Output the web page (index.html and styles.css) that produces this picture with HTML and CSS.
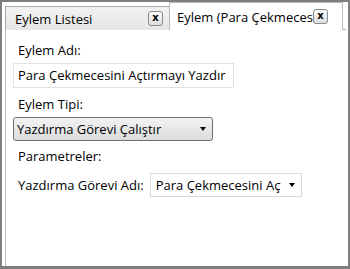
FILE: index.html
```html
<!DOCTYPE html>
<html>
<head>
<meta charset="utf-8">
<link rel="stylesheet" href="styles.css">
</head>
<body>
<div class="window">
  <div class="tabstrip">
    <div class="tab">
      <span class="tab-title">Eylem Listesi</span>
      <span class="close">x</span>
    </div>
    <div class="tab active">
      <span class="tab-title">Eylem (Para Çekmecesini Açtırmayı Yazdır)</span>
      <span class="close">x</span>
    </div>
  </div>
  <div class="panel">
    <div class="label">Eylem Adı:</div>
    <div class="textbox">Para Çekmecesini Açtırmayı Yazdır</div>
    <div class="label">Eylem Tipi:</div>
    <div class="combo">
      <span class="combo-text">Yazdırma Görevi Çalıştır</span>
      <span class="arrow"></span>
    </div>
    <div class="label">Parametreler:</div>
    <div class="param-row">
      <span class="param-label">Yazdırma Görevi Adı:</span>
      <div class="combo white">
        <span class="combo-text">Para Çekmecesini Açtırmayı Yazdır</span>
        <span class="arrow"></span>
      </div>
    </div>
  </div>
</div>
</body>
</html>
```
FILE: styles.css
```css
* { box-sizing: border-box; }
html, body { margin: 0; padding: 0; background: #fff; }
body {
  font-family: "Open Sans", "Noto Sans", sans-serif;
  font-size: 12px;
  color: #000;
}
.window {
  width: 350px;
  height: 269px;
  border: 2px solid #7f7f7f;
  border-bottom-width: 3px;
  padding: 1px 2px 0 3px;
  display: flex;
  flex-direction: column;
  overflow: hidden;
}
.tabstrip {
  display: flex;
  align-items: flex-end;
  height: 27px;
  flex: none;
  border-bottom: 1px solid #b0b0b0;
}
.tab {
  display: flex;
  align-items: center;
  height: 24px;
  width: 165px;
  padding: 0 6px 0 9px;
  border: 1px solid #a8a8a8;
  border-bottom: none;
  background: linear-gradient(#f2f2f2, #e6e6e6);
  margin-bottom: -1px;
  overflow: hidden;
}
.tab.active {
  height: 28px;
  width: 174px;
  background: #fff;
  border-color: #b8b8b8;
  padding: 0 14px 0 7px;
  margin-left: -1px;
  position: relative;
}
.tab-title {
  flex: 1;
  white-space: nowrap;
  overflow: hidden;
  font-size: 13px;
}
.close {
  flex: none;
  width: 15px;
  height: 15px;
  border: 1px solid #8a8a8a;
  border-radius: 3px;
  background: linear-gradient(#fdfdfd, #dcdcdc);
  font-family: "DejaVu Sans", sans-serif;
  font-weight: bold;
  font-size: 10px;
  line-height: 12px;
  text-align: center;
}
.tab.active .close {
  margin-left: -6px;
}
.panel {
  flex: 1;
  border-left: 1px solid #c0c0c0;
  padding: 10px 10px 0 7px;
}
.label {
  height: 20px;
  line-height: 20px;
  padding-left: 5px;
  font-size: 13px;
}
.textbox {
  width: 221px;
  height: 25px;
  border: 1px solid #e2e2e2;
  margin: 3px 0 6px;
  padding-left: 4px;
  line-height: 23px;
  font-size: 13px;
  white-space: nowrap;
  overflow: hidden;
}
.combo {
  display: flex;
  align-items: center;
  width: 200px;
  height: 24px;
  border: 1px solid #707070;
  border-radius: 3px;
  background: linear-gradient(#f3f3f3, #dcdcdc);
  margin: 3px 0 5px;
  padding: 0 6px 0 3px;
  font-size: 13px;
}
.combo-text {
  flex: 1;
  white-space: nowrap;
  overflow: hidden;
}
.arrow {
  flex: none;
  width: 0;
  height: 0;
  border-left: 3.5px solid transparent;
  border-right: 3.5px solid transparent;
  border-top: 4px solid #000;
  margin-left: 4px;
}
.param-row {
  display: flex;
  align-items: center;
  padding-left: 5px;
  margin-top: 7px;
}
.param-label {
  font-size: 13px;
  margin-right: 6px;
}
.combo.white {
  width: 152px;
  height: 24px;
  margin: 0;
  background: #fff;
  border: 1px solid #dadada;
  border-radius: 0;
  padding: 0 6px 0 5px;
}
.combo.white .arrow {
  margin-left: 8px;
}
```
